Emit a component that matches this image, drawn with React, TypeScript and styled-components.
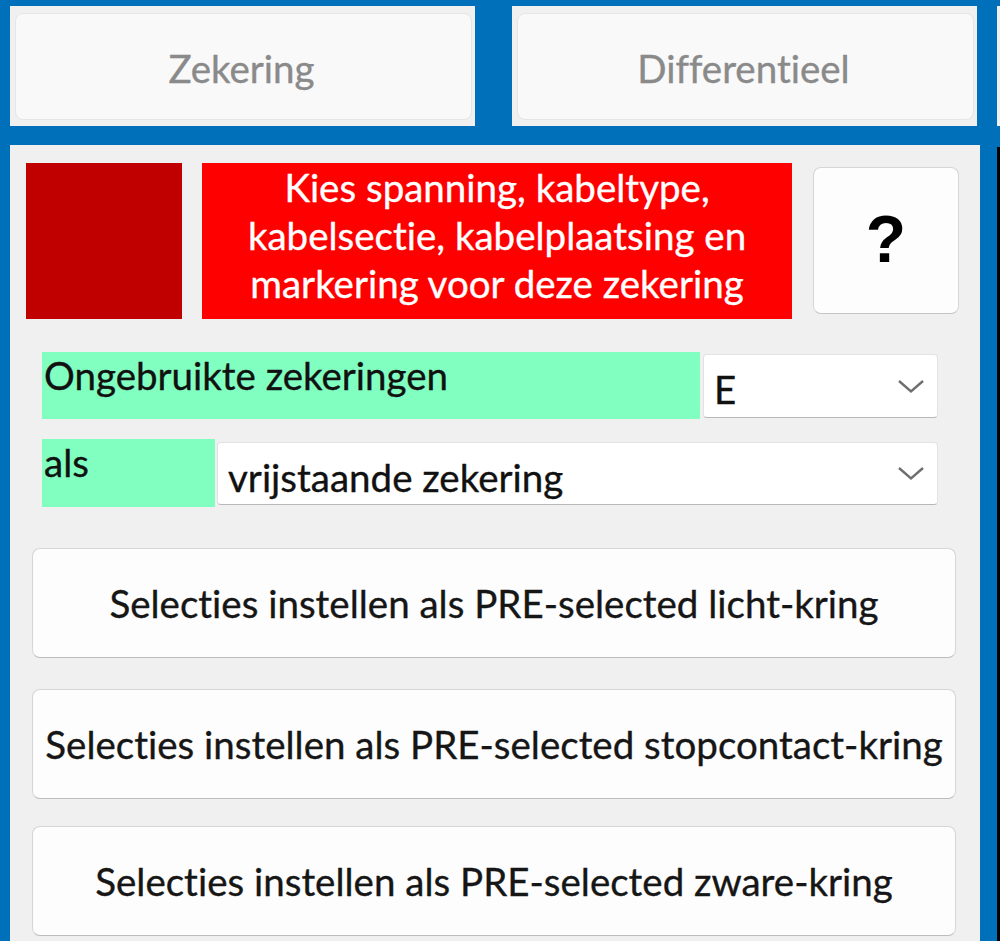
import React from "react";
import styled, { createGlobalStyle } from "styled-components";

const GlobalStyle = createGlobalStyle`
  html, body { margin: 0; padding: 0; }
  body {
    font-family: Lato, "Noto Sans", sans-serif;
    font-variant-ligatures: none;
    background: #0070bb;
  }
  * { box-sizing: border-box; }
`;

const Page = styled.div`
  width: 1000px;
  height: 941px;
  overflow: hidden;
  background: #0070bb;
  display: flex;
  flex-direction: column;
  font-size: 38.5px;
  font-variant-ligatures: none;
  -webkit-text-stroke: 0.35px currentColor;
`;

const TabRow = styled.div`
  display: flex;
  height: 145px;
  flex-shrink: 0;
  padding: 6px 0 0 10px;
  overflow: hidden;
`;

const Tab = styled.div<{ $offset: number; $width: number }>`
  flex-shrink: 0;
  width: ${(p) => p.$width}px;
  height: 120px;
  margin-left: ${(p) => p.$offset}px;
  background: #f0f0f0;
  padding: 7px 3px 6px 5px;
`;

const TabFace = styled.div`
  height: 100%;
  border: 1px solid #e6e6e6;
  border-radius: 8px;
  background: #f9f9f9;
  display: flex;
  align-items: center;
  justify-content: center;
  color: #8a8a8a;
  padding: 2px 4px 0 0;
`;

const Body = styled.div`
  flex: 1;
  display: flex;
  padding-left: 10px;
  gap: 17px;
`;

const Panel = styled.div`
  width: 970px;
  flex-shrink: 0;
  background: #f0f0f0;
  padding: 18px 0 0 16px;
  display: flex;
  flex-direction: column;
`;

const Edge = styled.div`
  width: 3px;
  margin-top: 2px;
  background: #000;
`;

const HeaderRow = styled.div`
  display: flex;
  align-items: flex-start;
`;

const Swatch = styled.div`
  width: 156px;
  height: 156px;
  background: #c00000;
  flex-shrink: 0;
`;

const Notice = styled.div`
  width: 590px;
  height: 156px;
  margin-left: 20px;
  background: #ff0000;
  color: #ffffff;
  text-align: center;
  line-height: 48px;
  flex-shrink: 0;
`;

const HelpButton = styled.button`
  width: 146px;
  height: 147px;
  margin: 4px 0 0 21px;
  border: 1px solid #d6d6d6;
  border-bottom-color: #c4c4c4;
  border-radius: 8px;
  background: #fdfdfd;
  font-family: "Liberation Sans", Arial, sans-serif;
  font-weight: bold;
  font-size: 66px;
  color: #000;
  -webkit-text-stroke: 0;
  display: flex;
  align-items: center;
  justify-content: center;
  padding: 0 0 4px 0;
`;

const FieldRow = styled.div<{ $top: number; $gap: number }>`
  display: flex;
  align-items: flex-start;
  margin: ${(p) => p.$top}px 0 0 16px;
  gap: ${(p) => p.$gap}px;
`;

const FieldLabel = styled.div<{ $width: number; $height: number }>`
  width: ${(p) => p.$width}px;
  height: ${(p) => p.$height}px;
  background: #80ffc0;
  color: #111;
  padding-left: 2px;
  line-height: 46px;
  flex-shrink: 0;
`;

const SelectBox = styled.div<{ $width: number; $height: number; $top: number }>`
  width: ${(p) => p.$width}px;
  height: ${(p) => p.$height}px;
  margin-top: ${(p) => p.$top}px;
  background: #ffffff;
  border: 1px solid #e2e2e2;
  border-bottom-color: #b8b8b8;
  border-radius: 4px;
  display: flex;
  align-items: center;
  justify-content: space-between;
  padding: 6px 12px 0 10px;
  color: #111;
  flex-shrink: 0;
`;

const Chevron = styled.svg`
  width: 28px;
  height: 15px;
  margin-bottom: 6px;
  flex-shrink: 0;
`;

const ActionButton = styled.button<{ $top: number }>`
  width: 924px;
  height: 110px;
  margin: ${(p) => p.$top}px 0 0 6px;
  border: 1px solid #d6d6d6;
  border-bottom-color: #bdbdbd;
  border-radius: 8px;
  background: #fdfdfd;
  font-family: Lato, "Noto Sans", sans-serif;
  font-variant-ligatures: none;
  font-size: 38.5px;
  color: #161616;
  -webkit-text-stroke: 0.35px currentColor;
  white-space: nowrap;
  padding: 0;
  display: flex;
  align-items: center;
  justify-content: center;
  flex-shrink: 0;
`;

const ChevronDown = () => (
  <Chevron viewBox="0 0 28 15">
    <polyline points="2,2 14,12.5 26,2" fill="none" stroke="#6e6e6e" strokeWidth="2.4" />
  </Chevron>
);

const tabs = [
  { label: "Zekering", offset: 0, width: 465 },
  { label: "Differentieel", offset: 37, width: 465 },
  { label: "", offset: 20, width: 465 },
];

const actions = [
  { label: "Selecties instellen als PRE-selected licht-kring", top: 41 },
  { label: "Selecties instellen als PRE-selected stopcontact-kring", top: 31 },
  { label: "Selecties instellen als PRE-selected zware-kring", top: 27 },
];

export default function App() {
  return (
    <>
      <GlobalStyle />
      <Page>
        <TabRow>
          {tabs.map((t, i) => (
            <Tab key={i} $offset={t.offset} $width={t.width}>
              <TabFace>{t.label}</TabFace>
            </Tab>
          ))}
        </TabRow>
        <Body>
          <Panel>
            <HeaderRow>
              <Swatch />
              <Notice>
                Kies spanning, kabeltype,
                <br />
                kabelsectie, kabelplaatsing en
                <br />
                markering voor deze zekering
              </Notice>
              <HelpButton>?</HelpButton>
            </HeaderRow>
            <FieldRow $top={33} $gap={3}>
              <FieldLabel $width={658} $height={67}>Ongebruikte zekeringen</FieldLabel>
              <SelectBox $width={235} $height={64} $top={2}>
                <span>E</span>
                <ChevronDown />
              </SelectBox>
            </FieldRow>
            <FieldRow $top={20} $gap={2}>
              <FieldLabel $width={173} $height={68}>als</FieldLabel>
              <SelectBox $width={721} $height={63} $top={3}>
                <span>vrijstaande zekering</span>
                <ChevronDown />
              </SelectBox>
            </FieldRow>
            {actions.map((a, i) => (
              <ActionButton key={i} $top={a.top}>{a.label}</ActionButton>
            ))}
          </Panel>
          <Edge />
        </Body>
      </Page>
    </>
  );
}
